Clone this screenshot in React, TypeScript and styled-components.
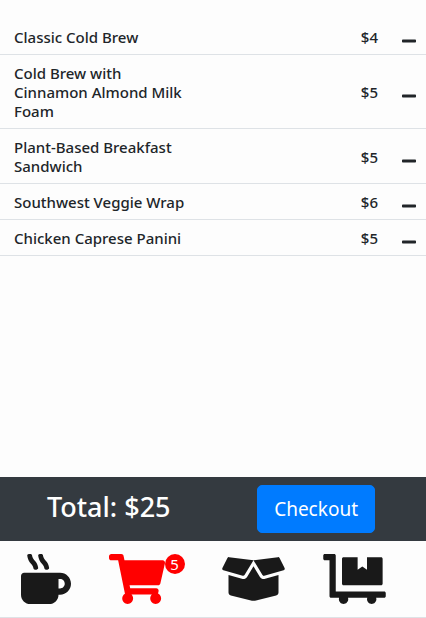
import React from "react";
import styled, { createGlobalStyle } from "styled-components";
import { FaBoxOpen, FaDollyFlatbed, FaMinus, FaMugHot, FaShoppingCart } from "react-icons/fa";

const GlobalStyle = createGlobalStyle`
  *, *::before, *::after { box-sizing: border-box; }
  body {
    margin: 0;
    background: #fdfdfd;
    color: #212529;
    font-family: "Segoe UI", "Noto Sans", sans-serif;
    font-size: 15px;
    line-height: 19px;
  }
`;

const Page = styled.div`
  display: flex;
  flex-direction: column;
  min-height: 100vh;
`;

const Cart = styled.main`
  flex: 1;
  padding-top: 19px;
`;

const ItemTable = styled.table`
  width: 100%;
  table-layout: fixed;
  border-collapse: separate;
  border-spacing: 0;
`;

const ItemRow = styled.tr`
  > * {
    padding: 9px 0 7px;
    border-bottom: 1px solid #dee2e6;
    vertical-align: middle;
  }
`;

const ItemName = styled.th`
  width: 45%;
  text-align: left;
  font-weight: 500;
  && { padding-left: 14px; }
`;

const ItemPrice = styled.td`
  text-align: right;
  font-weight: 500;
`;

const ItemAction = styled.td`
  width: 48px;
`;

const RemoveButton = styled.button`
  display: flex;
  align-items: flex-end;
  height: 19px;
  margin-left: auto;
  margin-right: 9px;
  padding: 3px 0 0;
  border: 0;
  background: none;
  color: #212529;
  cursor: pointer;

  svg {
    flex: none;
    margin-bottom: -2px;
  }
`;

const CheckoutBar = styled.section`
  display: flex;
  align-items: center;
  justify-content: space-between;
  padding: 8px 51px 8px 47px;
  background: #343a40;
`;

const Total = styled.h2`
  margin: 0;
  padding-bottom: 4px;
  color: #fff;
  font-size: 27px;
  line-height: 34px;
  font-weight: 500;
`;

const CheckoutButton = styled.button`
  height: 48px;
  padding: 0 16px;
  border: 1px solid #007bff;
  border-radius: 5px;
  background: #007bff;
  color: #fff;
  font-family: inherit;
  font-size: 19px;
  line-height: 30px;
  cursor: pointer;
`;

const Nav = styled.nav`
  display: flex;
  justify-content: space-between;
  padding: 13px 40px 13px 21px;
  border-bottom: 1px solid #dee2e6;
`;

const NavLink = styled.a<{ $iconWidth: number; $active?: boolean }>`
  display: flex;
  align-items: flex-start;
  color: ${({ $active }) => ($active ? "#ff0000" : "#191919")};
  text-decoration: none;

  svg {
    display: block;
    width: ${({ $iconWidth }) => $iconWidth}px;
    height: 50px;
  }
`;

const Badge = styled.span`
  width: 20px;
  height: 20px;
  border-radius: 50%;
  background: #ff0000;
  color: #fff;
  font-size: 15px;
  line-height: 20px;
  text-align: center;
`;

const items = [
  { name: "Classic Cold Brew", price: 4 },
  { name: "Cold Brew with Cinnamon Almond Milk Foam", price: 5 },
  { name: "Plant-Based Breakfast Sandwich", price: 5 },
  { name: "Southwest Veggie Wrap", price: 6 },
  { name: "Chicken Caprese Panini", price: 5 },
];

export default function App() {
  const total = items.reduce((sum, item) => sum + item.price, 0);

  return (
    <Page>
      <GlobalStyle />
      <Cart>
        <ItemTable>
          <tbody>
            {items.map((item) => (
              <ItemRow key={item.name}>
                <ItemName scope="row">{item.name}</ItemName>
                <ItemPrice>${item.price}</ItemPrice>
                <ItemAction>
                  <RemoveButton type="button" aria-label={`Remove ${item.name}`}>
                    <FaMinus size={16} />
                  </RemoveButton>
                </ItemAction>
              </ItemRow>
            ))}
          </tbody>
        </ItemTable>
      </Cart>
      <CheckoutBar>
        <Total>Total: ${total}</Total>
        <CheckoutButton type="button">Checkout</CheckoutButton>
      </CheckoutBar>
      <Nav>
        <NavLink href="#menu" aria-label="Menu" $iconWidth={50}>
          <FaMugHot />
        </NavLink>
        <NavLink href="#cart" aria-label="Cart" $iconWidth={56} $active>
          <FaShoppingCart />
          <Badge>{items.length}</Badge>
        </NavLink>
        <NavLink href="#orders" aria-label="Orders" $iconWidth={63}>
          <FaBoxOpen />
        </NavLink>
        <NavLink href="#deliveries" aria-label="Deliveries" $iconWidth={63}>
          <FaDollyFlatbed />
        </NavLink>
      </Nav>
    </Page>
  );
}
